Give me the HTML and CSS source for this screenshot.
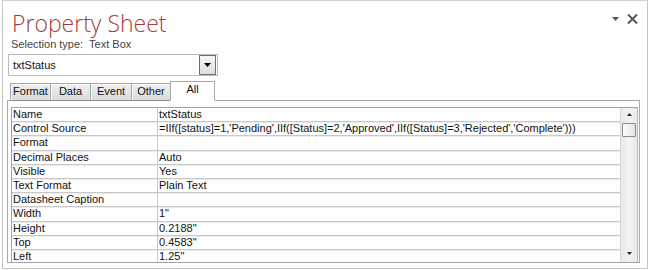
FILE: index.html
```html
<!DOCTYPE html>
<html lang="en">
<head>
    <meta charset="UTF-8">
    <title>Property Sheet</title>
    <link rel="stylesheet" href="styles.css">
</head>
<body>
    <div class="sheet">
        <div class="head">
            <h1 class="title">Property Sheet</h1>
            <div class="tools">
                <svg class="tool-menu" width="7" height="4" viewBox="0 0 7 4"><path d="M0 0H7L3.5 4Z" fill="#555"/></svg>
                <svg class="tool-close" width="11" height="10" viewBox="0 0 11 10"><path d="M1 0.5L10 9.5M10 0.5L1 9.5" stroke="#555" stroke-width="2"/></svg>
            </div>
        </div>
        <div class="sel">Selection type:&nbsp; Text Box</div>

        <div class="combo">
            <span class="combo-text">txtStatus</span>
            <span class="combo-btn">
                <svg width="7" height="4" viewBox="0 0 7 4"><path d="M0 0H7L3.5 4Z" fill="#000"/></svg>
            </span>
        </div>

        <div class="tabs">
            <div class="tab">Format</div>
            <div class="tab">Data</div>
            <div class="tab">Event</div>
            <div class="tab">Other</div>
            <div class="tab active">All</div>
        </div>

        <div class="panel">
            <div class="grid-box">
                <div class="grid">
                    <div class="row"><div class="key">Name</div><div class="val">txtStatus</div></div>
                    <div class="row"><div class="key">Control Source</div><div class="val">=IIf([status]=1,'Pending',IIf([Status]=2,'Approved',IIf([Status]=3,'Rejected','Complete')))</div></div>
                    <div class="row"><div class="key">Format</div><div class="val"></div></div>
                    <div class="row"><div class="key">Decimal Places</div><div class="val">Auto</div></div>
                    <div class="row"><div class="key">Visible</div><div class="val">Yes</div></div>
                    <div class="row"><div class="key">Text Format</div><div class="val">Plain Text</div></div>
                    <div class="row"><div class="key">Datasheet Caption</div><div class="val"></div></div>
                    <div class="row"><div class="key">Width</div><div class="val">1"</div></div>
                    <div class="row"><div class="key">Height</div><div class="val">0.2188"</div></div>
                    <div class="row"><div class="key">Top</div><div class="val">0.4583"</div></div>
                    <div class="row"><div class="key">Left</div><div class="val">1.25"</div></div>
                </div>
                <div class="scroll">
                    <svg class="arrow up" width="5" height="3" viewBox="0 0 5 3"><path d="M0 3H5L2.5 0Z" fill="#222"/></svg>
                    <div class="thumb"></div>
                    <div class="track"></div>
                    <svg class="arrow down" width="5" height="3" viewBox="0 0 5 3"><path d="M0 0H5L2.5 3Z" fill="#222"/></svg>
                </div>
            </div>
        </div>
    </div>
</body>
</html>
```

FILE: styles.css
```css
body {
    margin: 0;
    padding: 0;
    background-color: #ffffff;
    font-family: "Liberation Sans", Arial, sans-serif;
    font-size: 11px;
    color: #111;
}

.sheet {
    margin: 0 1px 0 2px;
    height: 267px;
    border: 1px solid #c6c6c6;
    border-top-color: #d0d0d0;
    overflow: hidden;
}

.head {
    display: flex;
    justify-content: space-between;
    align-items: flex-start;
    height: 36px;
}

.title {
    margin: 0;
    padding: 7px 0 0 9px;
    font-family: "Open Sans", sans-serif;
    font-weight: 300;
    font-size: 23px;
    line-height: 30px;
    color: #a63c3d;
}

.tools {
    display: flex;
    align-items: center;
    gap: 8px;
    padding: 13px 9px 0 0;
}

.tool-menu,
.tool-close {
    display: block;
}

.sel {
    padding-left: 8px;
    color: #444;
    line-height: 14px;
}

.combo {
    display: flex;
    align-items: center;
    justify-content: space-between;
    margin: 3px 0 0 5px;
    width: 204px;
    height: 20px;
    border: 1px solid #bcbcbc;
    padding-left: 4px;
}

.combo-btn {
    display: flex;
    align-items: center;
    justify-content: center;
    width: 15px;
    height: 18px;
    margin-right: 1px;
    border: 1px solid #707070;
    background: linear-gradient(#f6f6f6, #dedede);
}

.tabs {
    display: flex;
    align-items: flex-end;
    margin: 6px 0 -1px 7px;
    height: 19px;
    position: relative;
    z-index: 1;
}

.tab {
    height: 18px;
    line-height: 15px;
    border: 1px solid #a9a9a9;
    border-bottom-color: #8e8e8e;
    background: linear-gradient(#efefef, #dcdcdc);
    box-shadow: inset 1px 1px 0 #fafafa;
    text-align: center;
    box-sizing: border-box;
}

.tab:nth-child(1) { width: 41px; }
.tab:nth-child(2) { width: 41px; margin-left: -1px; }
.tab:nth-child(3) { width: 42px; margin-left: -1px; }
.tab:nth-child(4) { width: 40px; margin-left: -1px; }

.tab.active {
    width: 45px;
    height: 20px;
    margin-left: -1px;
    background: #ffffff;
    box-shadow: none;
    border-bottom-color: #ffffff;
    line-height: 14px;
}

.panel {
    margin-left: 4px;
    width: 633px;
    height: 163px;
    border: 1px solid #a9a9a9;
    padding: 6px 1px 0 3px;
    box-sizing: border-box;
}

.grid-box {
    display: flex;
    height: 154px;
    border: 1px solid #a4a4a4;
    border-right-color: #b8b8b8;
    overflow: hidden;
}

.grid {
    flex: 1;
}

.row {
    display: grid;
    grid-template-columns: 146px 1fr;
    height: 14.2px;
    line-height: 13px;
    box-sizing: border-box;
    border-bottom: 1px solid #c8c8c8;
    box-shadow: inset 0 1px 0 #ececec;
    overflow: hidden;
}

.row:first-child {
    box-shadow: none;
}

.key {
    padding-left: 1px;
    border-right: 1px solid #c8c8c8;
    white-space: nowrap;
}

.val {
    padding-left: 1px;
    white-space: nowrap;
    overflow: hidden;
}

.scroll {
    display: flex;
    flex-direction: column;
    align-items: center;
    width: 16px;
    border-left: 1px solid #d8d8d8;
    background: linear-gradient(90deg, #e9e9e9, #f3f3f3 50%, #e9e9e9);
}

.arrow {
    display: block;
}

.arrow.up {
    margin: 5px 0 7px;
}

.arrow.down {
    margin-bottom: 7px;
}

.thumb {
    width: 14px;
    height: 14px;
    box-sizing: border-box;
    border: 1px solid #8c8c8c;
    border-radius: 1px;
    background: linear-gradient(90deg, #fdfdfd, #e4e4e4);
}

.track {
    flex: 1;
}
```
